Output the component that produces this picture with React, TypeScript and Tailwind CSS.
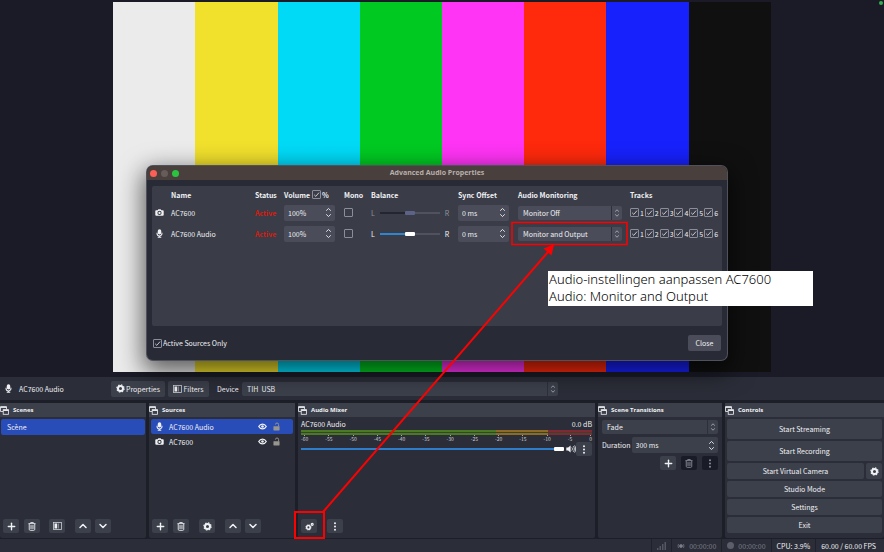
import { useState } from "react";
import type { ReactNode } from "react";
import { ChevronDown, ChevronUp, Plus } from "lucide-react";

const colorBars = ["bg-[#ebebeb]", "bg-[#f1e02c]", "bg-[#00daf7]", "bg-[#00ca22]", "bg-[#ff34f5]", "bg-[#ff290c]", "bg-[#1721fc]", "bg-[#101010]"];
const meterTicks = [-60, -55, -50, -45, -40, -35, -30, -25, -20, -15, -10, -5, 0];
const tracks = [1, 2, 3, 4, 5, 6];

type AudioSource = {
    id: string;
    name: string;
    kind: "camera" | "mic";
    monitoring: string;
    balanceEnabled: boolean;
};

const audioSources: AudioSource[] = [
    { id: "cam", name: "AC7600", kind: "camera", monitoring: "Monitor Off", balanceEnabled: false },
    { id: "mic", name: "AC7600 Audio", kind: "mic", monitoring: "Monitor and Output", balanceEnabled: true },
];

// Icons

function MicIcon({ className = "" }: { className?: string }) {
    return (
        <svg viewBox="0 0 8 10" className={`h-[9px] w-[7px] shrink-0 ${className}`} fill="none" stroke="currentColor">
            <rect x="2" y="0.2" width="4" height="6" rx="2" fill="currentColor" stroke="none" />
            <path d="M1.2 4.2v.8a2.8 2.8 0 0 0 5.6 0v-.8M4 7.6v1.6M2 9.2h4" strokeWidth="1.2" />
        </svg>
    );
}

function CameraIcon() {
    return (
        <svg viewBox="0 0 10 8" className="h-[7px] w-[9px] shrink-0" fill="currentColor">
            <path fillRule="evenodd" d="M1.2 1.4h1.7L3.7.3h2.6l.8 1.1h1.7c.6 0 1 .4 1 1v4.3c0 .6-.4 1-1 1H1.2c-.6 0-1-.4-1-1V2.4c0-.6.4-1 1-1zM5 2.1a2.4 2.4 0 1 0 0 4.8 2.4 2.4 0 0 0 0-4.8zm0 1.1a1.3 1.3 0 1 1 0 2.6 1.3 1.3 0 0 1 0-2.6z" />
        </svg>
    );
}

function GearIcon({ className = "h-[9px] w-[9px]" }: { className?: string }) {
    return (
        <svg viewBox="0 0 10 10" className={`shrink-0 ${className}`} fill="none" stroke="currentColor">
            <circle cx="5" cy="5" r="2.8" strokeWidth="2.2" />
            <circle cx="5" cy="5" r="4.1" strokeWidth="1.2" strokeDasharray="1.61 1.61" />
        </svg>
    );
}

function GearsIcon() {
    return (
        <svg viewBox="0 0 10 10" className="h-[9px] w-[9px]" fill="none" stroke="currentColor">
            <circle cx="3.8" cy="6" r="2" strokeWidth="1.7" />
            <circle cx="3.8" cy="6" r="3" strokeWidth="0.8" strokeDasharray="1.18 1.18" />
            <circle cx="8" cy="2.6" r="1.1" strokeWidth="1.3" />
        </svg>
    );
}

function FilterIcon() {
    return (
        <svg viewBox="0 0 9 8" className="h-2 w-[9px] shrink-0" fill="none" stroke="currentColor">
            <rect x="0.5" y="0.5" width="8" height="7" strokeWidth="0.8" opacity="0.8" />
            <rect x="1.5" y="1.5" width="2.5" height="5" fill="currentColor" stroke="none" />
            <rect x="4.5" y="1.5" width="1.5" height="5" fill="currentColor" stroke="none" opacity="0.4" />
        </svg>
    );
}

function TrashIcon() {
    return (
        <svg viewBox="0 0 9 10" className="h-[9px] w-2" fill="none" stroke="currentColor">
            <path d="M.5 1.8h8M3 1.6V.6h3v1M1.4 2v6.2c0 .7.4 1.1 1.1 1.1h4c.7 0 1.1-.4 1.1-1.1V2" strokeWidth="1" />
            <path d="M3.2 3.4v4.4M4.5 3.4v4.4M5.8 3.4v4.4" strokeWidth="0.8" />
        </svg>
    );
}

function DotsIcon() {
    return (
        <svg viewBox="0 0 4 10" className="h-[9px] w-1" fill="currentColor">
            <circle cx="2" cy="1.4" r="1.1" />
            <circle cx="2" cy="5" r="1.1" />
            <circle cx="2" cy="8.6" r="1.1" />
        </svg>
    );
}

function DockIcon() {
    return (
        <svg viewBox="0 0 9 9" className="h-[9px] w-[9px] shrink-0" fill="none" stroke="currentColor">
            <path d="M3.2 5.5H.5V.7h6v2.6" strokeWidth="0.8" />
            <path d="M.5 1.2h6" strokeWidth="1.3" />
            <rect x="3.2" y="3.7" width="5.3" height="4.6" strokeWidth="0.8" />
            <path d="M3.2 4.3h5.3" strokeWidth="1.3" />
        </svg>
    );
}

function EyeIcon() {
    return (
        <svg viewBox="0 0 10 8" className="h-[7px] w-[9px]" fill="none" stroke="currentColor">
            <path d="M.7 4C2.7.3 7.3.3 9.3 4 7.3 7.7 2.7 7.7.7 4z" strokeWidth="1.4" />
            <circle cx="5" cy="4" r="1.5" fill="currentColor" stroke="none" />
        </svg>
    );
}

function LockIcon() {
    return (
        <svg viewBox="0 0 8 10" className="h-[9px] w-[7px] text-[#97958e]" fill="currentColor">
            <rect x="0.5" y="4.6" width="7" height="4.9" rx="0.5" />
            <path d="M2.8 2.8a1.8 1.8 0 0 1 3.6 0V5" fill="none" stroke="currentColor" strokeWidth="1.1" />
        </svg>
    );
}

function SpeakerIcon() {
    return (
        <svg viewBox="0 0 10 8" className="h-2 w-[10px]" fill="none" stroke="currentColor">
            <path d="M.3 2.6h1.8L4.6.4v7.2L2.1 5.4H.3z" fill="currentColor" stroke="none" />
            <path d="M5.8 2.4c.8.9.8 2.3 0 3.2M7.2 1.2c1.5 1.6 1.5 4 0 5.6M8.6.4c1.4 2 1.4 5.2 0 7.2" strokeWidth="0.8" />
        </svg>
    );
}

function SourceIcon({ kind }: { kind: "camera" | "mic" }) {
    return <span className="flex w-[9px] shrink-0 justify-center">{kind === "mic" ? <MicIcon /> : <CameraIcon />}</span>;
}

// Form controls

function Arrows({ className }: { className: string }) {
    return (
        <svg viewBox="0 0 7 10" className={className} fill="none" stroke="currentColor" strokeWidth="0.9">
            <path d="M1.2 3.2 3.5 1l2.3 2.2M1.2 6.8 3.5 9l2.3-2.2" />
        </svg>
    );
}

function Check({ label, checked, children }: { label: string; checked: boolean; children?: ReactNode }) {
    const [on, setOn] = useState(checked);
    return (
        <label className="flex items-center gap-px">
            <span className="relative flex h-[9px] w-[9px] shrink-0">
                <input type="checkbox" aria-label={label} checked={on} onChange={() => setOn(!on)} className="h-[9px] w-[9px] appearance-none rounded-[1px] border border-[#8b8e98]" />
                {on && (
                    <svg viewBox="0 0 9 9" className="pointer-events-none absolute inset-0 h-[9px] w-[9px]" fill="none" stroke="#d4d6dc" strokeWidth="0.9">
                        <path d="M2.2 4.8 3.8 6.4 7 2.6" />
                    </svg>
                )}
            </span>
            {children}
        </label>
    );
}

function Spin({ label, value, className = "bg-[#4a4d59]" }: { label: string; value: string; className?: string }) {
    return (
        <span className={`flex h-4 items-center rounded-[2px] pr-[3px] ${className}`}>
            <input aria-label={label} defaultValue={value} className="w-full min-w-0 bg-transparent pl-1 outline-none" />
            <Arrows className="h-[11px] w-[7px] shrink-0" />
        </span>
    );
}

function Select({ id, label, options, className = "bg-[#4a4d59]" }: { id?: string; label: string; options: string[]; className?: string }) {
    return (
        <span className={`relative flex h-[14px] rounded-[2px] ${className}`}>
            <select id={id} aria-label={label} className="h-full w-full appearance-none bg-transparent pl-[5px] outline-none">
                {options.map((option) => <option key={option}>{option}</option>)}
            </select>
            <span className="pointer-events-none absolute inset-y-0 right-0 flex w-[11px] items-center justify-center border-l border-[#2d303a] text-[#c4c6cd]">
                <Arrows className="h-2 w-[6px]" />
            </span>
        </span>
    );
}

function IconButton({ label, children, className = "bg-[#3c404b]" }: { label: string; children: ReactNode; className?: string }) {
    return (
        <button aria-label={label} className={`flex h-[14px] w-4 shrink-0 items-center justify-center rounded-[2px] ${className}`}>
            {children}
        </button>
    );
}

function BalanceSlider({ enabled, name }: { enabled: boolean; name: string }) {
    return (
        <div className={`flex items-center gap-[5px] ${enabled ? "" : "text-[#8f929c]"}`}>
            <span>L</span>
            <input
                type="range"
                aria-label={`${name} balance`}
                disabled={!enabled}
                className={
                    enabled
                        ? "h-1 w-[60px] appearance-none bg-transparent [&::-webkit-slider-runnable-track]:h-[2px] [&::-webkit-slider-runnable-track]:bg-linear-to-r [&::-webkit-slider-runnable-track]:from-[#2e86d0] [&::-webkit-slider-runnable-track]:from-50% [&::-webkit-slider-runnable-track]:to-[#50535e] [&::-webkit-slider-runnable-track]:to-50% [&::-webkit-slider-thumb]:-mt-px [&::-webkit-slider-thumb]:h-1 [&::-webkit-slider-thumb]:w-[10px] [&::-webkit-slider-thumb]:appearance-none [&::-webkit-slider-thumb]:rounded-[1px] [&::-webkit-slider-thumb]:bg-white"
                        : "h-1 w-[60px] appearance-none bg-transparent [&::-webkit-slider-runnable-track]:h-[2px] [&::-webkit-slider-runnable-track]:bg-linear-to-r [&::-webkit-slider-runnable-track]:from-[#23252f] [&::-webkit-slider-runnable-track]:from-50% [&::-webkit-slider-runnable-track]:to-[#50535e] [&::-webkit-slider-runnable-track]:to-50% [&::-webkit-slider-thumb]:-mt-px [&::-webkit-slider-thumb]:h-1 [&::-webkit-slider-thumb]:w-[10px] [&::-webkit-slider-thumb]:appearance-none [&::-webkit-slider-thumb]:rounded-[1px] [&::-webkit-slider-thumb]:bg-[#5c6288]"
                }
            />
            <span>R</span>
        </div>
    );
}

function Dock({ title, children }: { title: string; children: ReactNode }) {
    return (
        <section className="flex min-w-0 flex-col rounded-[2px] bg-[#2b2d38]">
            <h2 className="flex h-[14px] items-center gap-1 bg-[#3c404b] font-['Open_Sans',sans-serif] text-[6px] font-bold">
                <DockIcon />
                {title}
            </h2>
            {children}
        </section>
    );
}

function AudioPropertiesDialog() {
    return (
        <div role="dialog" aria-label="Advanced Audio Properties" className="absolute top-[166px] left-[147px] flex w-[580px] flex-col overflow-hidden rounded-[6px] bg-[#282a35] shadow-[0_8px_24px_4px_rgba(0,0,0,0.6)] ring-1 ring-[#50525b]">
            <div className="flex h-[14px] items-center bg-[#493f3c] px-[3px]">
                <div className="flex w-8 gap-1">
                    <span className="h-[7px] w-[7px] rounded-full bg-[#fb5f57]" />
                    <span className="h-[7px] w-[7px] rounded-full bg-[#665c5a]" />
                    <span className="h-[7px] w-[7px] rounded-full bg-[#2ac440]" />
                </div>
                <h1 className="flex-1 pr-8 text-center font-['Open_Sans',sans-serif] font-bold text-[#b8b0ad]">Advanced Audio Properties</h1>
            </div>
            <div className="mx-[5px] mt-[6px] h-[140px] rounded-[2px] bg-[#3a3d47] pt-px">
                <table className="w-full table-fixed text-left">
                    <thead>
                        <tr className="h-[15px]">
                            <th className="w-[19px]" />
                            <th className="w-[84px]">Name</th>
                            <th className="w-[29px]">Status</th>
                            <th className="w-[60px]">
                                <span className="flex items-center gap-[2px]">
                                    Volume
                                    <Check label="Volume in percent" checked>%</Check>
                                </span>
                            </th>
                            <th className="w-[27px]">Mono</th>
                            <th className="w-[87px]">Balance</th>
                            <th className="w-[60px]">Sync Offset</th>
                            <th className="w-[112px]">Audio Monitoring</th>
                            <th>Tracks</th>
                        </tr>
                    </thead>
                    <tbody>
                        {audioSources.map((source) => (
                            <tr key={source.id} className="h-[21px]">
                                <td className="pl-[3px]"><SourceIcon kind={source.kind} /></td>
                                <td>{source.name}</td>
                                <td className="font-bold text-[#d81c10]">Active</td>
                                <td className="pr-[9px]"><Spin label={`${source.name} volume`} value="100%" /></td>
                                <td><Check label={`${source.name} mono`} checked={false} /></td>
                                <td><BalanceSlider enabled={source.balanceEnabled} name={source.name} /></td>
                                <td className="pr-[9px]"><Spin label={`${source.name} sync offset`} value="0 ms" /></td>
                                <td className="pr-2"><Select label={`${source.name} monitoring`} options={[source.monitoring]} /></td>
                                <td>
                                    <div className="grid w-[89px] grid-cols-6">
                                        {tracks.map((track) => <Check key={track} label={`${source.name} track ${track}`} checked>{track}</Check>)}
                                    </div>
                                </td>
                            </tr>
                        ))}
                    </tbody>
                </table>
            </div>
            <div className="flex h-[34px] items-center justify-between px-[6px]">
                <Check label="Active Sources Only" checked>Active Sources Only</Check>
                <button className="h-4 w-[33px] rounded-[2px] bg-[#4a4d59]">Close</button>
            </div>
        </div>
    );
}

function ScenesDock() {
    return (
        <Dock title="Scenes">
            <ul className="flex-1 px-px pt-[2px]">
                <li className="flex h-4 items-center rounded-[2px] bg-[#284cb8] pl-[6px]">Scène</li>
            </ul>
            <div className="flex items-center pb-[5px] pl-[3px]">
                <IconButton label="Add scene"><Plus size={11} strokeWidth={3} /></IconButton>
                <span className="w-[5px]" />
                <IconButton label="Remove scene"><TrashIcon /></IconButton>
                <span className="w-[9px]" />
                <IconButton label="Scene filters"><FilterIcon /></IconButton>
                <span className="w-[10px]" />
                <IconButton label="Move scene up"><ChevronUp size={12} strokeWidth={3} /></IconButton>
                <span className="w-1" />
                <IconButton label="Move scene down"><ChevronDown size={12} strokeWidth={3} /></IconButton>
            </div>
        </Dock>
    );
}

function SourcesDock() {
    const [selected, setSelected] = useState("mic");
    return (
        <Dock title="Sources">
            <ul className="flex-1 px-[2px] pt-[2px]">
                {[...audioSources].reverse().map((source) => (
                    <li key={source.id} onClick={() => setSelected(source.id)} className={`flex h-[15px] items-center gap-[5px] rounded-[2px] pr-[13px] pl-1 ${selected === source.id ? "bg-[#284cb8]" : ""}`}>
                        <SourceIcon kind={source.kind} />
                        <span className="flex-1">{source.name}</span>
                        <button aria-label={`Show ${source.name}`}><EyeIcon /></button>
                        <button aria-label={`Lock ${source.name}`} className="pl-px"><LockIcon /></button>
                    </li>
                ))}
            </ul>
            <div className="flex items-center pb-[5px] pl-[3px]">
                <IconButton label="Add source"><Plus size={11} strokeWidth={3} /></IconButton>
                <span className="w-[5px]" />
                <IconButton label="Remove source"><TrashIcon /></IconButton>
                <span className="w-[10px]" />
                <IconButton label="Source properties"><GearIcon /></IconButton>
                <span className="w-[10px]" />
                <IconButton label="Move source up"><ChevronUp size={12} strokeWidth={3} /></IconButton>
                <span className="w-1" />
                <IconButton label="Move source down"><ChevronDown size={12} strokeWidth={3} /></IconButton>
            </div>
        </Dock>
    );
}

function MeterChannel() {
    return (
        <div className="flex h-[2px]">
            <span className="w-[67%] bg-[#4c7a24]" />
            <span className="w-[18%] bg-[#8f6a26]" />
            <span className="flex-1 bg-[#7d2a35]" />
        </div>
    );
}

function MixerDock() {
    return (
        <Dock title="Audio Mixer">
            <div className="flex-1 px-[3px] pt-px">
                <div className="flex h-3 items-center justify-between">
                    <span>AC7600 Audio</span>
                    <span>0.0 dB</span>
                </div>
                <div className="flex flex-col gap-px bg-[#33452b]">
                    <MeterChannel />
                    <MeterChannel />
                </div>
                <div className="flex justify-between text-[5px] leading-[5px] text-[#c9cbd2]">
                    {meterTicks.map((tick) => (
                        <span key={tick} className="flex flex-col items-center">
                            <i className="h-px w-px bg-[#a5a8b0]" />
                            {tick}
                        </span>
                    ))}
                </div>
                <div className="flex h-4 items-center">
                    <input
                        type="range"
                        aria-label="AC7600 Audio volume"
                        defaultValue={100}
                        className="mr-[2px] h-1 min-w-0 flex-1 appearance-none bg-transparent [&::-webkit-slider-runnable-track]:h-[2px] [&::-webkit-slider-runnable-track]:bg-[#2e7dcb] [&::-webkit-slider-thumb]:-mt-px [&::-webkit-slider-thumb]:h-1 [&::-webkit-slider-thumb]:w-[10px] [&::-webkit-slider-thumb]:appearance-none [&::-webkit-slider-thumb]:rounded-[1px] [&::-webkit-slider-thumb]:bg-white"
                    />
                    <button aria-label="Mute"><SpeakerIcon /></button>
                    <IconButton label="AC7600 Audio options"><DotsIcon /></IconButton>
                </div>
            </div>
            <div className="flex gap-[10px] pb-[5px] pl-[3px]">
                <IconButton label="Advanced audio properties"><GearsIcon /></IconButton>
                <IconButton label="Mixer options"><DotsIcon /></IconButton>
            </div>
        </Dock>
    );
}

function TransitionsDock() {
    return (
        <Dock title="Scene Transitions">
            <div className="flex flex-col gap-[3px] px-1 pt-[3px]">
                <Select label="Transition" options={["Fade"]} className="bg-[#3c404b]" />
                <label className="flex items-center gap-px [&>span]:flex-1">
                    Duration
                    <Spin label="Duration" value="300 ms" className="bg-[#3c404b]" />
                </label>
                <div className="flex justify-end gap-[5px]">
                    <IconButton label="Add transition"><Plus size={11} strokeWidth={3} /></IconButton>
                    <IconButton label="Remove transition" className="bg-[#191b26] text-[#8b8e98]"><TrashIcon /></IconButton>
                    <IconButton label="Transition options" className="bg-[#191b26] text-[#8b8e98]"><DotsIcon /></IconButton>
                </div>
            </div>
        </Dock>
    );
}

function ControlsDock() {
    return (
        <Dock title="Controls">
            <div className="flex flex-col gap-[2px] px-[2px] pt-[2px] [&_button]:rounded-[2px] [&_button]:bg-[#3c404b]">
                <button className="h-5">Start Streaming</button>
                <button className="h-5">Start Recording</button>
                <div className="flex h-4 gap-[2px]">
                    <button className="flex-1">Start Virtual Camera</button>
                    <button aria-label="Virtual camera settings" className="flex w-4 items-center justify-center"><GearIcon /></button>
                </div>
                <button className="h-4">Studio Mode</button>
                <button className="h-4">Settings</button>
                <button className="h-4">Exit</button>
            </div>
        </Dock>
    );
}

function StatusBar() {
    return (
        <footer className="flex h-[13px] items-stretch justify-end bg-[#2b2d38] pr-[3px] [&>span]:flex [&>span]:items-center [&>span]:gap-1 [&>span]:border-l [&>span]:border-[#1f212b] [&>span]:px-[5px]">
            <span className="text-[#555862]">
                <svg viewBox="0 0 9 8" className="h-2 w-[9px]" fill="currentColor">
                    <path d="M0 6h1.5v2H0zM2.5 4H4v4H2.5zM5 2h1.5v6H5zM7.5 0H9v8H7.5z" />
                </svg>
            </span>
            <span className="text-[#7d808a]">
                <svg viewBox="0 0 8 8" className="h-2 w-2" fill="none" stroke="currentColor" strokeWidth="0.7">
                    <circle cx="4" cy="4" r="1.5" fill="currentColor" />
                    <path d="M1.6 2c-.7 1.2-.7 2.8 0 4M6.4 2c.7 1.2.7 2.8 0 4" />
                </svg>
                00:00:00
            </span>
            <span className="text-[#7d808a]">
                <i className="h-[7px] w-[7px] rounded-full bg-[#5c5f69]" />
                00:00:00
            </span>
            <span>CPU: 3.9%</span>
            <span>60.00 / 60.00 FPS</span>
        </footer>
    );
}

function Annotations() {
    return (
        <>
            <svg viewBox="0 0 884 552" className="pointer-events-none absolute top-0 left-0 h-[552px] w-[884px]" fill="none" stroke="#ff0000" strokeWidth="2">
                <rect x="512" y="222.5" width="115" height="22" strokeWidth="1.5" />
                <rect x="295" y="512" width="29" height="26" />
                <path d="M323 512 548 252" />
                <path d="M554 244.5 551.5 255.5 543.5 248.5z" fill="#ff0000" stroke="none" />
            </svg>
            <p className="absolute top-[271px] left-[548px] h-[35px] w-[265px] bg-white pl-px font-['Noto_Sans',sans-serif] text-[13px] leading-[17px] font-light text-black">
                Audio-instellingen aanpassen AC7600
                <br />
                Audio: Monitor and Output
            </p>
        </>
    );
}

export default function App() {
    return (
        <div className="relative flex min-h-screen flex-col bg-[#1c1e28] font-['Noto_Sans_CJK_KR',sans-serif] text-[7px] leading-[10px] text-[#f0f1f5]">
            <main className="flex-1 bg-[#1a1b26] pt-[2px]">
                <div className="mx-auto flex aspect-video w-[74.4%]">
                    {colorBars.map((color) => <div key={color} className={`flex-1 ${color}`} />)}
                </div>
                <span className="absolute top-px right-px h-1 w-1 rounded-full bg-[#35b04c]" />
            </main>

            <div className="mb-[3px] flex h-[23px] items-center bg-[#2b2d38] pl-[5px]">
                <MicIcon />
                <span className="w-[99px] pl-[7px]">AC7600 Audio</span>
                <button className="mr-[3px] flex h-4 w-[54px] items-center justify-center gap-px rounded-[2px] bg-[#3c404b]"><GearIcon />Properties</button>
                <button className="flex h-4 w-[41px] items-center justify-center gap-px rounded-[2px] bg-[#3c404b]"><FilterIcon />Filters</button>
                <label htmlFor="device" className="w-[33px] pl-2">Device</label>
                <div className="w-[36%]"><Select id="device" label="Device" options={["TIH\u00a0 USB"]} className="bg-[#3c404b]" /></div>
            </div>

            <div className="mb-px grid h-[135px] grid-cols-[146fr_146fr_297fr_124fr_159fr] gap-[3px]">
                <ScenesDock />
                <SourcesDock />
                <MixerDock />
                <TransitionsDock />
                <ControlsDock />
            </div>
            <StatusBar />

            <AudioPropertiesDialog />
            <Annotations />
        </div>
    );
}
